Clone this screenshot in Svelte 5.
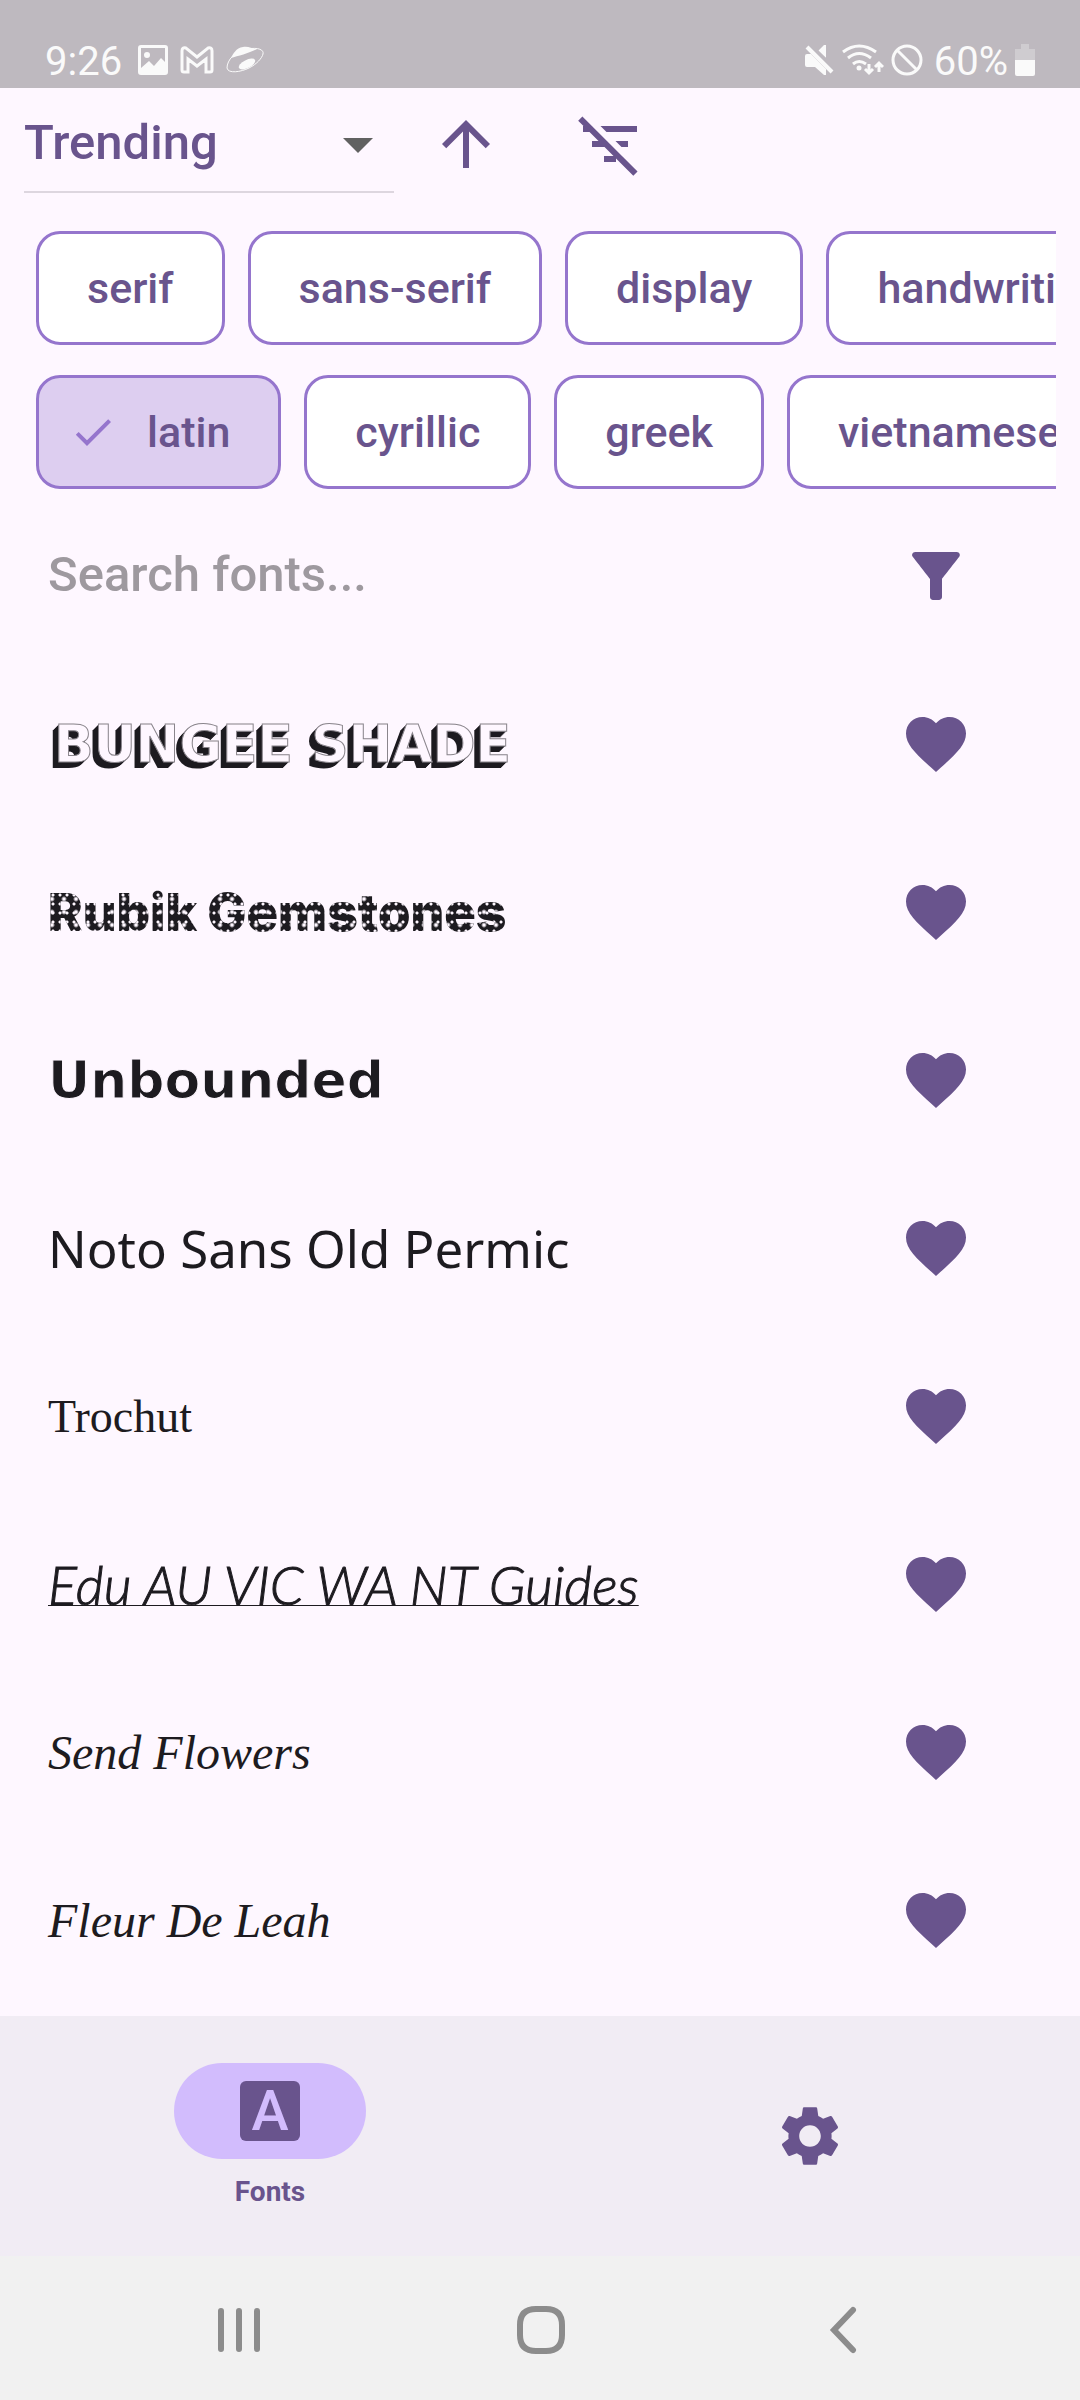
<script>
    let sort = "Trending";
    let search = "";
    let categories = ["serif", "sans-serif", "display", "handwriting"];
    let subsets = ["latin", "cyrillic", "greek", "vietnamese"];
    let selected = ["latin"];
    const fonts = [
        { name: "BUNGEE SHADE", style: "bungee" },
        { name: "Rubik Gemstones", style: "rubik" },
        { name: "Unbounded", style: "unbounded" },
        { name: "Noto Sans Old Permic", style: "noto" },
        { name: "Trochut", style: "trochut" },
        { name: "Edu AU VIC WA NT Guides", style: "edu" },
        { name: "Send Flowers", style: "send" },
        { name: "Fleur De Leah", style: "fleur" },
    ];

    $: filtered = fonts.filter((font) =>
        font.name.toLowerCase().includes(search.toLowerCase())
    );

    function toggle(chip) {
        selected = selected.includes(chip)
            ? selected.filter((c) => c !== chip)
            : [...selected, chip];
    }
</script>

<div class="app">
    <header class="status">
        <div class="left">
            <span>9:26</span>
            <svg width="30" height="30" viewBox="0 0 30 30">
                <path
                    fill-rule="evenodd"
                    d="M3 0h24q3 0 3 3v24q0 3-3 3H3q-3 0-3-3V3q0-3 3-3zM3 3v20l8-7 5 5 7-8 4 4V3zM9 7a3 3 0 1 1 0 6 3 3 0 0 1 0-6z"
                />
            </svg>
            <svg width="34" height="28" viewBox="0 0 34 28">
                <path
                    class="line medium"
                    d="M2 24V5q0-4 4-3l11 9 11-9q4-1 4 3v19q0 2-2 2h-4V13l-9 7-9-7v13H4q-2 0-2-2z"
                />
            </svg>
            <svg width="38" height="28" viewBox="0 0 38 28">
                <path class="line thin" d="M1 22C1 14 9 5 21 3s17 1 16 5-6 10-14 14S2 28 1 22z" />
                <path d="M5 12C7 8 10 2 17 1c6-1 9 2 14 2C24 7 12 10 5 12z" />
                <ellipse cx="21" cy="18" rx="9" ry="4" transform="rotate(-27 21 18)" />
            </svg>
        </div>
        <div class="right">
            <svg width="30" height="32" viewBox="0 0 30 32">
                <path d="M0 12q0-2 2-2h4L21 25v6l-2 0-9-8H2q-2 0-2-2zM19 1h2v13l-8-7z" />
                <path class="gap" d="M5 0l26 26" />
                <path class="line" d="M2 3l25 25" />
            </svg>
            <svg width="42" height="32" viewBox="0 0 42 32">
                <path class="line medium" d="M1 8q16-12 33 0M6 14q11-9 23 0M11 20q6-5 13 0" />
                <circle cx="17" cy="24" r="2.5" />
                <path class="line medium" d="M27 20v9m-4-4l4 4 4-4M37 28v-9m-4 4l4-4 4 4" />
            </svg>
            <svg width="32" height="32" viewBox="0 0 32 32">
                <circle class="line medium" cx="16" cy="16" r="14" />
                <path class="line medium" d="M6 6l20 20" />
            </svg>
            <span>60%</span>
            <svg width="20" height="32" viewBox="0 0 20 32">
                <path d="M6 0h8v5h6v11H0V5h6z" opacity=".3" />
                <path d="M0 16h20v14q0 2-2 2H2q-2 0-2-2z" />
            </svg>
        </div>
    </header>

    <main>
        <div class="toolbar">
            <div class="dropdown">
                <select bind:value={sort} aria-label="Sort by">
                    <option>Trending</option>
                    <option>Popularity</option>
                    <option>Alphabetical</option>
                </select>
                <svg class="caret" width="72" height="72" viewBox="0 0 24 24">
                    <path d="M7 10l5 5 5-5z" />
                </svg>
            </div>
            <button class="icon" aria-label="Sort direction">
                <svg viewBox="0 0 24 24">
                    <path d="M4 12l1.41 1.41L11 7.83V20h2V7.83l5.58 5.59L20 12l-8-8-8 8z" />
                </svg>
            </button>
            <button class="icon" aria-label="Clear filters">
                <svg viewBox="0 0 24 24">
                    <path
                        d="M10.83 8H21V6H8.83l2 2zm5 5H18v-2h-4.17l2 2zM14 16.83V18h-4v-2h3.17l-3-3H6v-2h2.17l-3-3H3V6h.17L1.39 4.22 2.8 2.81l18.38 18.38-1.41 1.41L14 16.83z"
                    />
                </svg>
            </button>
        </div>

        {#each [categories, subsets] as chips}
            <div class="chips">
                {#each chips as chip}
                    <button
                        class="chip"
                        class:selected={selected.includes(chip)}
                        aria-pressed={selected.includes(chip)}
                        on:click={() => toggle(chip)}
                    >
                        {#if selected.includes(chip)}
                            <svg width="48" height="48" viewBox="0 0 24 24">
                                <path d="M9 16.17L4.83 12l-1.42 1.41L9 19 21 7l-1.41-1.41z" />
                            </svg>
                        {/if}
                        {chip}
                    </button>
                {/each}
            </div>
        {/each}

        <div class="row">
            <input
                type="text"
                placeholder="Search fonts..."
                aria-label="Search fonts"
                bind:value={search}
            />
            <button class="icon" aria-label="Filter">
                <svg viewBox="0 0 24 24">
                    <path
                        d="M4.25 5.61C6.27 8.2 10 13 10 13v6c0 .55.45 1 1 1h2c.55 0 1-.45 1-1v-6s3.72-4.8 5.74-7.39c.51-.66.04-1.61-.79-1.61H5.04c-.83 0-1.3.95-.79 1.61z"
                    />
                </svg>
            </button>
        </div>

        <ul>
            {#each filtered as font}
                <li class="row">
                    <span class="name {font.style}">{font.name}</span>
                    <button class="icon" aria-label="Favorite {font.name}">
                        <svg viewBox="0 0 24 24">
                            <path
                                d="M12 21.35l-1.45-1.32C5.4 15.36 2 12.28 2 8.5 2 5.42 4.42 3 7.5 3c1.74 0 3.41.81 4.5 2.09C13.09 3.81 14.76 3 16.5 3 19.58 3 22 5.42 22 8.5c0 3.78-3.4 6.86-8.55 11.54L12 21.35z"
                            />
                        </svg>
                    </button>
                </li>
            {/each}
        </ul>
    </main>

    <nav class="tabs">
        <button class="tab">
            <span class="pill"><span class="letter" aria-hidden="true">A</span></span>
            <span class="label">Fonts</span>
        </button>
        <button class="tab" aria-label="Settings">
            <svg width="72" height="72" viewBox="0 0 24 24">
                <path
                    d="M19.14 12.94c.04-.3.06-.61.06-.94 0-.32-.02-.64-.07-.94l2.03-1.58c.18-.14.23-.41.12-.61l-1.92-3.32c-.12-.22-.37-.29-.59-.22l-2.39.96c-.5-.38-1.03-.7-1.62-.94l-.36-2.54c-.04-.24-.24-.41-.48-.41h-3.84c-.24 0-.43.17-.47.41l-.36 2.54c-.59.24-1.13.57-1.62.94l-2.39-.96c-.22-.08-.47 0-.59.22L2.74 8.87c-.12.21-.08.47.12.61l2.03 1.58c-.05.3-.09.63-.09.94s.02.64.07.94l-2.03 1.58c-.18.14-.23.41-.12.61l1.92 3.32c.12.22.37.29.59.22l2.39-.96c.5.38 1.03.7 1.62.94l.36 2.54c.05.24.24.41.48.41h3.84c.24 0 .44-.17.47-.41l.36-2.54c.59-.24 1.13-.56 1.62-.94l2.39.96c.22.08.47 0 .59-.22l1.92-3.32c.12-.22.07-.47-.12-.61l-2.01-1.58zM12 15.6c-1.98 0-3.6-1.62-3.6-3.6s1.62-3.6 3.6-3.6 3.6 1.62 3.6 3.6-1.62 3.6-3.6 3.6z"
                />
            </svg>
        </button>
    </nav>

    <nav class="system">
        <button aria-label="Recents">
            <svg width="48" height="48" viewBox="0 0 48 48">
                <path d="M6 5v38M24 5v38M42 5v38" />
            </svg>
        </button>
        <button aria-label="Home">
            <svg width="48" height="48" viewBox="0 0 48 48">
                <path
                    d="M19 3h10q16 0 16 16v10q0 16-16 16H19Q3 45 3 29V19Q3 3 19 3z"
                />
            </svg>
        </button>
        <button aria-label="Back">
            <svg width="48" height="48" viewBox="0 0 48 48">
                <path d="M34 4L15 24l19 20" />
            </svg>
        </button>
    </nav>
</div>

<style>
    :global(body) {
        margin: 0;
    }
    .app {
        --purple: #69548d;
        --border: #9575cd;
        --surface: #fef7ff;
        --ink: #1d1b20;
        min-height: 100vh;
        display: flex;
        flex-direction: column;
        background: var(--surface);
        color: var(--ink);
        font-family: Roboto, sans-serif;
    }
    button {
        all: unset;
        box-sizing: border-box;
        cursor: pointer;
    }
    svg {
        display: block;
        flex: none;
    }
    .status {
        box-sizing: border-box;
        height: 88px;
        padding: 32px 45px 0;
        display: flex;
        align-items: center;
        justify-content: space-between;
        background: #beb9bf;
        color: #fafafa;
        font-size: 40px;
        line-height: 52px;
    }
    .status svg {
        fill: #fafafa;
    }
    .status span {
        padding-top: 4px;
    }
    .status .line {
        fill: none;
        stroke: #fafafa;
        stroke-width: 4;
    }
    .status .medium {
        stroke-width: 3;
    }
    .status .thin {
        stroke-width: 1;
    }
    .status .gap {
        stroke: #beb9bf;
        stroke-width: 3;
    }
    .left,
    .right {
        display: flex;
        align-items: center;
    }
    .left {
        gap: 12px;
    }
    .left span {
        margin-right: 4px;
    }
    .right {
        gap: 7px;
    }
    .right span {
        margin-left: 4px;
    }
    main {
        flex: 1;
        display: flex;
        flex-direction: column;
    }
    .toolbar {
        display: flex;
        height: 112px;
        padding: 0 24px;
        margin-bottom: 31px;
    }
    .dropdown {
        display: grid;
        align-items: center;
        width: 370px;
        height: 103px;
        border-bottom: 2px solid #ddd6df;
    }
    .dropdown select,
    .caret {
        grid-area: 1 / 1;
    }
    .dropdown select {
        appearance: none;
        height: 100%;
        padding: 5px 0 0;
        border: 0;
        background: none;
        color: var(--purple);
        font: 500 49px Roboto, sans-serif;
    }
    .caret {
        justify-self: end;
        margin-top: 8px;
        fill: #616161;
        pointer-events: none;
    }
    .icon {
        display: flex;
        flex: none;
        align-items: center;
        justify-content: center;
        width: 144px;
        height: 112px;
    }
    .icon svg {
        width: 72px;
        height: 72px;
        fill: var(--purple);
    }
    .chips {
        display: flex;
        gap: 23px;
        margin: 0 24px 30px;
        padding-left: 12px;
        overflow: hidden;
    }
    .chip {
        display: flex;
        flex: none;
        align-items: center;
        gap: 30px;
        height: 114px;
        padding: 0 48px;
        border: 3px solid var(--border);
        border-radius: 24px;
        background: white;
        color: var(--purple);
        font-size: 43px;
        font-weight: 500;
    }
    .chip.selected {
        padding-left: 30px;
        background: #ddcef0;
    }
    .chip svg {
        fill: var(--border);
    }
    .row {
        display: flex;
        align-items: center;
        height: 168px;
        padding: 0 72px 0 48px;
    }
    .chips + .row {
        margin-top: -27px;
    }
    input {
        flex: 1;
        min-width: 0;
        padding: 0 0 4px;
        border: 0;
        outline: 0;
        background: none;
        color: var(--ink);
        font: 500 49px Roboto, sans-serif;
    }
    input::placeholder {
        color: #9e999f;
        opacity: 1;
    }
    ul {
        flex: 1;
        margin: 0;
        padding: 0;
        list-style: none;
    }
    .name {
        flex: 1;
        font-size: 48px;
        white-space: nowrap;
    }
    .bungee {
        padding-left: 6px;
        color: var(--surface);
        font-family: "DejaVu Sans", sans-serif;
        font-size: 52px;
        font-weight: 700;
        -webkit-text-stroke: 1px #8a858c;
        text-shadow:
            -1px 1px var(--ink),
            -2px 2px var(--ink),
            -3px 3px var(--ink),
            -4px 4px var(--ink),
            -5px 5px var(--ink),
            -6px 6px var(--ink);
    }
    .rubik {
        background:
            radial-gradient(circle at 4px 5px, var(--surface) 1px, transparent 3px) 0 0 / 12px 13px,
            radial-gradient(circle at 5px 5px, var(--surface) 1px, transparent 2px) 0 0 / 7px 9px,
            var(--ink);
        background-clip: text;
        color: transparent;
        font-family: Inter, sans-serif;
        font-size: 52px;
        font-weight: 900;
    }
    .unbounded {
        font-family: "DejaVu Sans", sans-serif;
        font-size: 52px;
        font-weight: 700;
        -webkit-text-stroke: 1px var(--surface);
    }
    .noto {
        font-family: "Noto Sans", sans-serif;
        font-size: 51px;
    }
    .trochut {
        font-family: "Liberation Serif", serif;
        font-size: 46px;
    }
    .edu {
        font-family: Lato, sans-serif;
        font-size: 54px;
        font-style: italic;
        font-weight: 300;
        -webkit-text-stroke: 1px var(--ink);
        text-decoration: underline 1px;
        text-decoration-skip-ink: none;
        text-underline-offset: 0;
    }
    .send,
    .fleur {
        font-family: "Liberation Serif", serif;
        font-style: italic;
    }
    .tabs {
        display: grid;
        grid-template-columns: 1fr 1fr;
        height: 240px;
        background: #f1ecf4;
    }
    .tab {
        display: flex;
        flex-direction: column;
        align-items: center;
        justify-content: center;
        gap: 16px;
    }
    .tab svg {
        fill: var(--purple);
    }
    .pill {
        display: flex;
        align-items: center;
        justify-content: center;
        width: 192px;
        height: 96px;
        border-radius: 48px;
        background: #d2bcfd;
    }
    .letter {
        width: 60px;
        border-radius: 6px;
        background: var(--purple);
        color: #d2bcfd;
        font-size: 56px;
        font-weight: 500;
        line-height: 60px;
        text-align: center;
    }
    .label {
        color: var(--purple);
        font-size: 28px;
        font-weight: 700;
        line-height: 34px;
    }
    .system {
        box-sizing: border-box;
        display: grid;
        grid-template-columns: repeat(3, 1fr);
        height: 144px;
        padding: 4px 86px 0 88px;
        background: #f1f1f1;
    }
    .system button {
        display: flex;
        align-items: center;
        justify-content: center;
    }
    .system svg {
        fill: none;
        stroke: #8c8c8c;
        stroke-width: 6;
        stroke-linecap: round;
    }
</style>
